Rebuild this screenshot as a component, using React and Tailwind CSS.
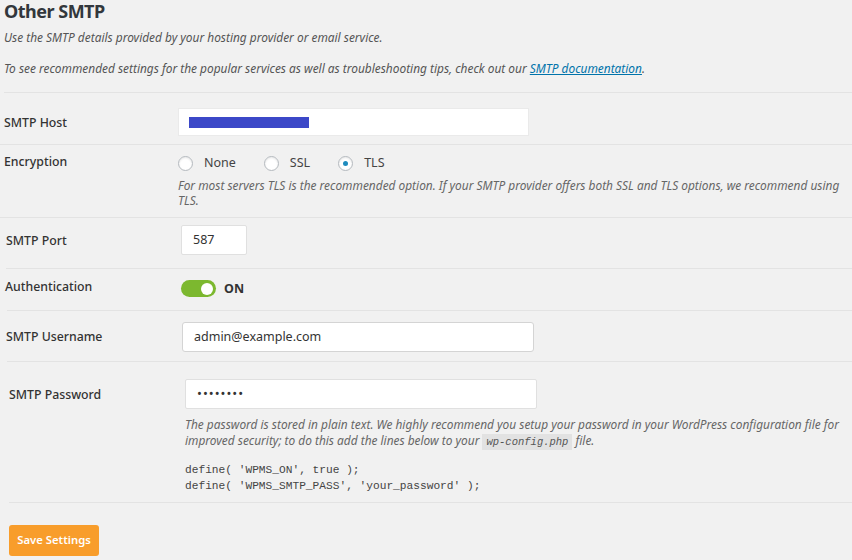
import React from "react";

const font = { fontFamily: '"Noto Sans", "Open Sans", sans-serif' };

function Radio({ checked, label }) {
  return (
    <label className="flex items-center">
      <span className="w-[15px] h-[15px] shrink-0 rounded-full border border-[#b4b9be] bg-white shadow-[inset_0_1px_2px_rgba(0,0,0,0.1)] flex items-center justify-center">
        {checked && <span className="w-[5px] h-[5px] rounded-full bg-[#1e8cbe]" />}
      </span>
      <span className="ml-[11px] text-[12.5px] text-[#444]">{label}</span>
    </label>
  );
}

const labelCls = "shrink-0 text-[12.3px] font-medium text-[#333] leading-[18px]";

export default function App() {
  return (
    <div
      className="w-[852px] h-[560px] overflow-hidden bg-[#f1f1f1] text-[#444]"
      style={font}
    >
      <div className="pl-[4px]">
        <h2 className="text-[18px] leading-[22px] font-bold text-[#32373c] tracking-[-0.5px]">Other SMTP</h2>
        <p className="italic text-[11.9px] text-[#555] mt-[6px] leading-[18px]">
          Use the SMTP details provided by your hosting provider or email service.
        </p>
        <p className="italic text-[11.9px] text-[#555] mt-[13px] leading-[18px]">
          To see recommended settings for the popular services as well as troubleshooting tips, check out our{" "}
          <a className="text-[#0073aa] underline">SMTP documentation</a>.
        </p>
      </div>
      <div className="mt-[15px] ml-[4px] border-b border-[#e3e3e3]" />

      {/* SMTP Host */}
      <div className="pl-[4px] flex border-b border-[#e3e3e3] h-[52px]">
        <div className={`w-[174px] pt-[21px] ${labelCls}`}>SMTP Host</div>
        <div className="pt-[15px]">
          <div className="w-[351px] h-[28px] bg-white border border-[#eaeaea] flex items-center pl-[10px]">
            <div className="w-[120px] h-[11px] bg-[#3c48c8]" />
          </div>
        </div>
      </div>

      {/* Encryption */}
      <div className="pl-[4px] flex border-b border-[#e3e3e3] h-[73px]">
        <div className={`w-[174px] pt-[8px] ${labelCls}`}>Encryption</div>
        <div className="pt-[9px]">
          <div className="flex items-center gap-[28px] h-[18px]">
            <Radio label="None" />
            <Radio label="SSL" />
            <Radio checked label="TLS" />
          </div>
          <p className="italic text-[11.9px] text-[#666] leading-[15px] mt-[6px] pr-[4px]">
            For most servers TLS is the recommended option. If your SMTP provider offers both SSL and TLS options, we recommend using TLS.
          </p>
        </div>
      </div>

      {/* SMTP Port */}
      <div className="ml-[6px] flex border-b border-[#e3e3e3] h-[51px]">
        <div className={`w-[175px] pt-[14px] ${labelCls}`}>SMTP Port</div>
        <div className="pt-[7px]">
          <div className="w-[66px] h-[30px] bg-white border border-[#e0e0e0] rounded-[2px] flex items-center pl-[11px] text-[12.5px] text-[#333]">
            587
          </div>
        </div>
      </div>

      {/* Authentication */}
      <div className="ml-[7px] flex border-b border-[#e3e3e3] h-[42px]">
        <div className={`w-[174px] pt-[9px] -ml-[2px] ${labelCls}`}>Authentication</div>
        <div className="pt-[11px] flex items-start ml-[2px]">
          <div className="w-[35px] h-[17px] rounded-full bg-[#7cb82f] relative">
            <div className="absolute right-[3px] top-[2.5px] w-[12px] h-[12px] rounded-full bg-white" />
          </div>
          <span className="ml-[8px] text-[12.5px] font-bold text-[#333] leading-[17px]">ON</span>
        </div>
      </div>

      {/* SMTP Username */}
      <div className="ml-[7px] flex border-b border-[#e3e3e3] h-[51px]">
        <div className={`w-[175px] pt-[17px] -ml-[1px] ${labelCls}`}>SMTP Username</div>
        <div className="pt-[11px] ml-[1px]">
          <div className="w-[352px] h-[30px] bg-white border border-[#d4d4d4] rounded-[3px] flex items-center pl-[11px] text-[12.5px] text-[#333]">
            admin@example.com
          </div>
        </div>
      </div>

      {/* SMTP Password */}
      <div className="ml-[9px] flex border-b border-[#e3e3e3] h-[141px]">
        <div className={`w-[176px] pt-[24px] ${labelCls}`}>SMTP Password</div>
        <div className="pt-[17px]">
          <div className="w-[352px] h-[30px] bg-white border border-[#e0e0e0] rounded-[2px] flex items-center pl-[11px] text-[13px] text-[#333] tracking-[1px]">
            ••••••••
          </div>
          <p className="italic text-[11.9px] text-[#666] leading-[16px] mt-[7px] pr-[4px]">
            The password is stored in plain text. We highly recommend you setup your password in your WordPress configuration file for improved security; to do this add the lines below to your{" "}
            <code
              className="inline-block bg-[#e2e2e2] px-[4px] leading-[16px] text-[10.5px] text-[#555]"
              style={{ fontFamily: '"Liberation Mono", monospace', fontStyle: "italic" }}
            >
              wp-config.php
            </code>{" "}
            file.
          </p>
          <pre
            className="mt-[12px] text-[11.2px] leading-[16px] text-[#444]"
            style={{ fontFamily: '"Liberation Mono", monospace' }}
          >
{`define( 'WPMS_ON', true );
define( 'WPMS_SMTP_PASS', 'your_password' );`}
          </pre>
        </div>
      </div>

      <div className="pl-[9px] pt-[22px]">
        <button className="w-[90px] h-[31px] bg-[#f89d2b] text-white text-[11.3px] font-semibold rounded-[3px]">
          Save Settings
        </button>
      </div>
    </div>
  );
}
